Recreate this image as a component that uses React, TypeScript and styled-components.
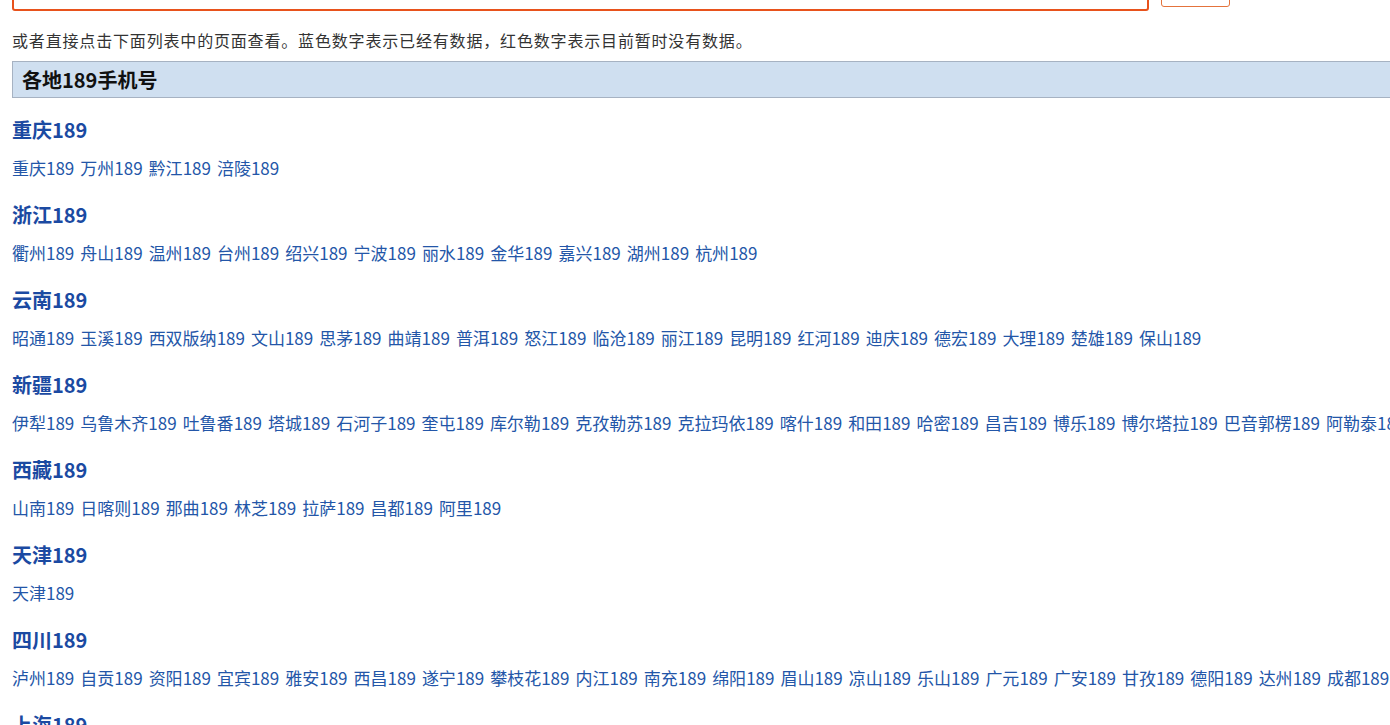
import styled, { createGlobalStyle } from "styled-components"

type Region = {
	name: string,
	cities: string[]
}

const regions: Region[] = [
	{ name: "重庆", cities: ["重庆", "万州", "黔江", "涪陵"] },
	{ name: "浙江", cities: ["衢州", "舟山", "温州", "台州", "绍兴", "宁波", "丽水", "金华", "嘉兴", "湖州", "杭州"] },
	{ name: "云南", cities: ["昭通", "玉溪", "西双版纳", "文山", "思茅", "曲靖", "普洱", "怒江", "临沧", "丽江", "昆明", "红河", "迪庆", "德宏", "大理", "楚雄", "保山"] },
	{ name: "新疆", cities: ["伊犁", "乌鲁木齐", "吐鲁番", "塔城", "石河子", "奎屯", "库尔勒", "克孜勒苏", "克拉玛依", "喀什", "和田", "哈密", "昌吉", "博乐", "博尔塔拉", "巴音郭楞", "阿勒泰", "阿克苏"] },
	{ name: "西藏", cities: ["山南", "日喀则", "那曲", "林芝", "拉萨", "昌都", "阿里"] },
	{ name: "天津", cities: ["天津"] },
	{ name: "四川", cities: ["泸州", "自贡", "资阳", "宜宾", "雅安", "西昌", "遂宁", "攀枝花", "内江", "南充", "绵阳", "眉山", "凉山", "乐山", "广元", "广安", "甘孜", "德阳", "达州", "成都"] },
	{ name: "上海", cities: ["上海"] }
]

const GlobalStyle = createGlobalStyle`
	html, body {
		margin: 0;
		padding: 0;
		overflow: hidden;
		background: #ffffff;
	}
	body {
		font-family: "Noto Sans CJK SC", "Noto Sans", sans-serif;
		color: #333333;
	}
`

function App() {
	return (
		<>
			<GlobalStyle />
			<Page>
				<SearchRow>
					<SearchInput type="text" />
					<SearchButton type="button" />
				</SearchRow>
				<Intro>或者直接点击下面列表中的页面查看。蓝色数字表示已经有数据，红色数字表示目前暂时没有数据。</Intro>
				<BarTitle>各地189手机号</BarTitle>
				{regions.map(region => (
					<Section key={region.name}>
						<RegionTitle href="#">{region.name}189</RegionTitle>
						<CityLine>
							{region.cities.map(city => (
								<CityLink key={city} href="#">{city}189</CityLink>
							))}
						</CityLine>
					</Section>
				))}
			</Page>
		</>
	)
}

const Page = styled.div`
	width: 1440px;
	padding-left: 12px;
`

const SearchRow = styled.div`
	display: flex;
	align-items: flex-start;
	gap: 12px;
	margin-top: -30px;
`

const SearchInput = styled.input`
	box-sizing: border-box;
	width: 1137px;
	height: 41px;
	border: 2px solid #e8521c;
	border-radius: 3px;
	outline: none;
`

const SearchButton = styled.button`
	box-sizing: border-box;
	width: 69px;
	height: 37px;
	background: #ffffff;
	border: 1px solid #e4733c;
	border-radius: 3px;
`

const Intro = styled.div`
	margin-top: 15px;
	font-size: 16px;
	line-height: 28px;
	color: #333333;
	letter-spacing: 0.83px;
`

const BarTitle = styled.div`
	box-sizing: border-box;
	margin-top: 7px;
	height: 37px;
	padding-left: 9px;
	background: #cfdff0;
	border: 1px solid #a6b2c2;
	border-right: none;
	font-size: 20px;
	font-weight: 700;
	line-height: 35px;
	color: #111111;
`

const Section = styled.div`
	padding-top: 17px;
`

const RegionTitle = styled.a`
	display: block;
	height: 30px;
	font-size: 20px;
	font-weight: 700;
	line-height: 30px;
	color: #1b4aa2;
	text-decoration: none;
	margin-bottom: 8px;
`

const CityLine = styled.div`
	display: flex;
	gap: 6px;
	white-space: nowrap;
	height: 30px;
	line-height: 30px;
`

const CityLink = styled.a`
	font-size: 17px;
	color: #2356a8;
	text-decoration: none;
`

export default App
